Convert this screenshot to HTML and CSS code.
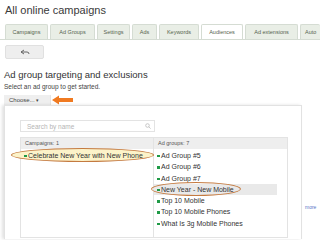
FILE: index.html
```html
<!DOCTYPE html>
<html lang="en">
<head>
    <meta charset="UTF-8">
    <title>All online campaigns</title>
    <link rel="stylesheet" href="styles.css">
</head>
<body>
    <div class="title">All online campaigns</div>
    <div class="tabs">
        <span class="tab" style="width:43px">Campaigns</span>
        <span class="tab" style="width:45px">Ad Groups</span>
        <span class="tab" style="width:33px">Settings</span>
        <span class="tab" style="width:25px">Ads</span>
        <span class="tab" style="width:40px">Keywords</span>
        <span class="tab active" style="width:42px">Audiences</span>
        <span class="tab" style="width:53px">Ad extensions</span>
        <span class="tab last">Auto</span>
    </div>
    <div class="back">
        <svg width="10" height="6" viewBox="0 0 10 6"><path d="M4 1 L1 3 L4 5 M1 3 H7 Q9 3 9 5" fill="none" stroke="#666" stroke-width="1"/></svg>
    </div>
    <h2 class="section">Ad group targeting and exclusions</h2>
    <p class="hint">Select an ad group to get started.</p>
    <div class="chooser">
        <span class="choose">Choose... <span class="caret">&#9662;</span></span>
        <svg class="pointer" width="22" height="10" viewBox="0 0 22 10"><path d="M0 5 L7 0.5 V3 H21 V7 H7 V9.5 Z" fill="#f07a21"/></svg>
    </div>
    <div class="stage">
        <div class="panel">
            <div class="search">
                <span>Search by name</span>
                <svg width="6" height="6" viewBox="0 0 6 6"><circle cx="2.5" cy="2.5" r="1.8" fill="none" stroke="#bbb" stroke-width="0.8"/><path d="M3.8 3.8 L5.6 5.6" stroke="#bbb" stroke-width="0.8"/></svg>
            </div>
            <div class="lists">
                <div class="list">
                    <div class="list-head">Campaigns: 1</div>
                    <div class="item marked wide"><i class="dot"></i>Celebrate New Year with New Phone</div>
                </div>
                <div class="list">
                    <div class="list-head">Ad groups: 7</div>
                    <div class="item"><i class="dot"></i>Ad Group #5</div>
                    <div class="item"><i class="dot"></i>Ad Group #6</div>
                    <div class="item"><i class="dot"></i>Ad Group #7</div>
                    <div class="item selected marked"><i class="dot"></i>New Year - New Mobile</div>
                    <div class="item"><i class="dot"></i>Top 10 Mobile</div>
                    <div class="item"><i class="dot"></i>Top 10 Mobile Phones</div>
                    <div class="item"><i class="dot"></i>What Is 3g Mobile Phones</div>
                </div>
            </div>
        </div>
        <a class="more">more</a>
    </div>
</body>
</html>
```

FILE: styles.css
```css
body {
    margin: 0;
    width: 320px;
    height: 240px;
    overflow: hidden;
    background: #fff;
    font-family: "Liberation Sans", Arial, sans-serif;
    color: #333;
}

.title {
    font-size: 11px;
    line-height: 13px;
    padding: 4px 0 0 5px;
    color: #3a3a3a;
}

.tabs {
    display: flex;
    gap: 2px;
    margin-top: 7px;
    padding-left: 5px;
    border-bottom: 1px solid #d5dcd3;
    white-space: nowrap;
    overflow: hidden;
}

.tab {
    flex: none;
    box-sizing: border-box;
    height: 15px;
    line-height: 14px;
    font-size: 5.5px;
    text-align: center;
    color: #56634f;
    background: #e9eee6;
    border: 1px solid #d5dcd3;
    border-bottom: none;
    border-radius: 2px 2px 0 0;
}

.tab.active {
    background: #fff;
    height: 16px;
    margin-bottom: -1px;
}

.tab.last {
    flex: 1;
    text-align: left;
    padding-left: 4px;
    border-right: none;
}

.back {
    width: 37px;
    height: 12px;
    margin: 5px 0 0 5px;
    display: flex;
    align-items: center;
    justify-content: center;
    background: #eeeeee;
    border: 1px solid #e0e0e0;
    border-radius: 2px;
}

.section {
    font-weight: normal;
    font-size: 9.5px;
    line-height: 11px;
    margin: 10px 0 0 4px;
    color: #333;
}

.hint {
    font-size: 6.5px;
    line-height: 8px;
    margin: 3px 0 0 4px;
    color: #444;
}

.chooser {
    display: flex;
    align-items: center;
    margin: 4px 0 0 4px;
    height: 10px;
}

.choose {
    font-size: 6px;
    line-height: 10px;
    padding: 0 5px;
    width: 36px;
    background: #efefef;
    color: #444;
    border-right: 1px solid #e4e4e4;
}

.caret {
    font-size: 5px;
}

.pointer {
    margin-left: 1px;
}

.stage {
    position: relative;
}

.panel {
    width: 298px;
    height: 134px;
    margin-left: 4px;
    padding: 14px 0 0 15px;
    box-sizing: border-box;
    background: #fff;
    border: 1px solid #e2e2e2;
    border-bottom: none;
    box-shadow: -2px 0 3px rgba(0, 0, 0, 0.12);
}

.search {
    width: 135px;
    height: 12px;
    box-sizing: border-box;
    border: 1px solid #e3e3e3;
    display: flex;
    align-items: center;
    justify-content: space-between;
    padding: 0 3px 0 6px;
    font-size: 6.5px;
    color: #b5b5b5;
}

.lists {
    display: flex;
    margin-top: 5px;
}

.list {
    width: 134px;
    height: 101px;
    border: 1px solid #e3e3e3;
    box-sizing: border-box;
}

.list + .list {
    border-left: none;
}

.list-head {
    height: 11px;
    line-height: 11px;
    font-size: 5.5px;
    padding-left: 4px;
    color: #555;
    background: #eeeeee;
    margin-bottom: 1px;
}

.item {
    position: relative;
    height: 11.3px;
    line-height: 11.3px;
    font-size: 7px;
    color: #333;
    padding-left: 3px;
    margin-right: 10px;
    white-space: nowrap;
}

.dot {
    display: inline-block;
    width: 2.5px;
    height: 2.5px;
    background: #1f9a46;
    margin-right: 1.5px;
    vertical-align: middle;
}

.item.selected {
    background: #e9e9e9;
}

.item.marked::before {
    content: "";
    position: absolute;
    left: -3px;
    top: -2px;
    width: 90px;
    height: 14px;
    box-sizing: border-box;
    border: 1px solid #c47a40;
    border-radius: 50%;
}

.item.wide {
    margin-right: 0;
    z-index: 0;
}

.item.wide::before {
    left: -10px;
    width: 143px;
    background: #fcf3c9;
    z-index: -1;
}

.more {
    position: absolute;
    left: 305px;
    top: 99px;
    font-size: 5px;
    color: #5a78c8;
}
```
